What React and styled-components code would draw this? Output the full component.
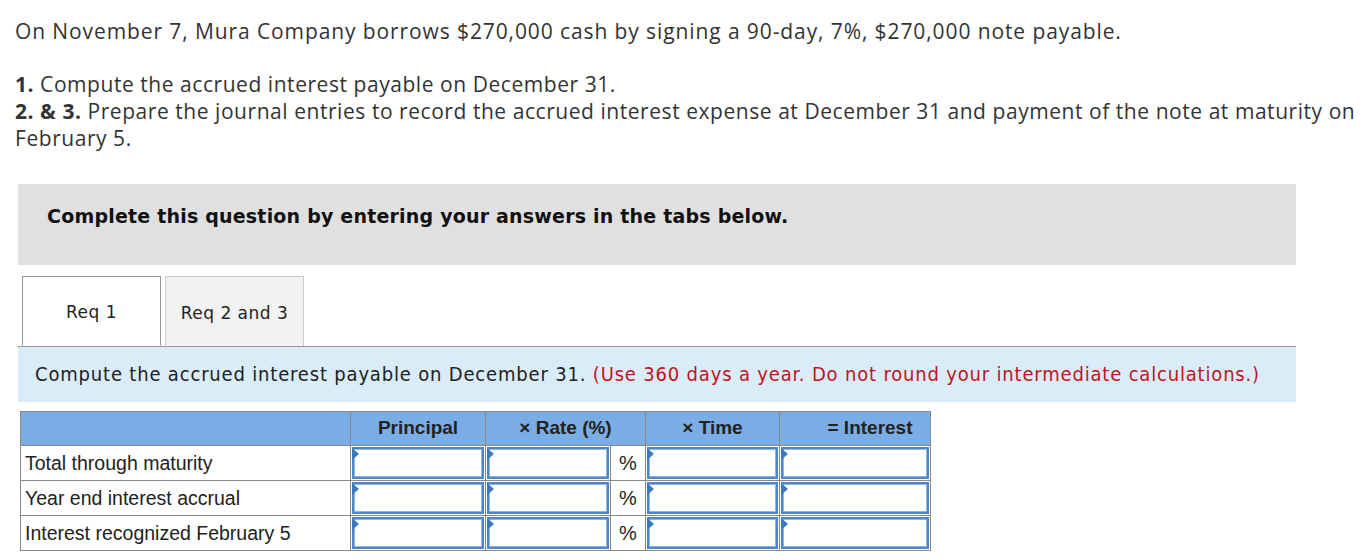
import React from 'react'
import styled, { createGlobalStyle } from 'styled-components'

const GlobalStyle = createGlobalStyle`
  body {
    margin: 0;
    background: #fff;
    font-family: "Open Sans", "Liberation Sans", sans-serif;
  }
`

const Page = styled.div`
  padding: 18px 0 0 15px;
  width: 1353px;
`

const Intro = styled.p`
  margin: 0;
  font-size: 21px;
  letter-spacing: ${p => p.$spacing || 0.55}px;
  line-height: 27px;
  color: #333;
  white-space: nowrap;
`

const Steps = styled(Intro)`
  margin-top: 26px;
  b { font-weight: 700; }
`

const Banner = styled.div`
  margin: 32px 0 0 3px;
  width: 1278px;
  height: 81px;
  box-sizing: border-box;
  background: #e0e0e0;
  padding: 21px 0 0 29px;
  font-family: "DejaVu Sans", Verdana, sans-serif;
  font-weight: 700;
  font-size: 19px;
  letter-spacing: 0.2px;
  color: #111;
`

const TabBar = styled.div`
  display: flex;
  gap: 4px;
  margin: 11px 0 0 3px;
  width: 1278px;
  padding-left: 4px;
  box-sizing: border-box;
  border-bottom: 1px solid #999;
`

const Tab = styled.div`
  width: 139px;
  height: 70px;
  box-sizing: border-box;
  display: flex;
  align-items: center;
  justify-content: center;
  font-family: "DejaVu Sans", Verdana, sans-serif;
  font-size: 17px;
  letter-spacing: 0.5px;
  color: #222;
  background: ${p => (p.$active ? '#fff' : '#f2f2f2')};
  border: 1px solid ${p => (p.$active ? '#999' : '#ccc')};
  border-bottom: ${p => (p.$active ? '1px solid #fff' : 'none')};
  margin-bottom: ${p => (p.$active ? '-1px' : '0')};
  padding-top: 2px;
`

const Instruction = styled.div`
  margin-left: 3px;
  width: 1278px;
  height: 55px;
  box-sizing: border-box;
  background: #dbecf9;
  padding: 15px 0 0 17px;
  font-family: "DejaVu Sans Condensed", "DejaVu Sans", Verdana, sans-serif;
  font-size: 20px;
  letter-spacing: 0.82px;
  color: #222;
  white-space: nowrap;
`

const Red = styled.span`
  color: #c1141b;
`

const Table = styled.table`
  margin: 9px 0 0 5px;
  border-collapse: collapse;
  table-layout: fixed;
  font-family: "Liberation Sans Narrow", "Liberation Sans", Arial, sans-serif;
  color: #222;
`

const Head = styled.th`
  height: 34px;
  background: #7aade4;
  border: 1px solid #888;
  font-size: 19px;
  font-weight: 700;
  text-align: center;
  padding: 0 0 2px ${p => p.$pad || 0}px;
  box-sizing: border-box;
`

const Label = styled.td`
  height: 34px;
  border: 1px solid #888;
  padding: 0 0 0 4px;
  font-size: 19.5px;
  text-align: left;
`

const InputCell = styled.td`
  height: 34px;
  border: 1px solid #888;
  padding: 1px;
  box-sizing: border-box;
`

const Unit = styled.td`
  border: 1px solid #888;
  font-size: 20px;
  text-align: center;
  padding: 0;
`

const FieldWrap = styled.div`
  position: relative;
  height: 32px;
  box-sizing: border-box;
  background: #fff;
  border: 2px solid #4d86c9;
  box-shadow: inset 0 0 0 1px #8fb5e3;
`

const Marker = styled.span`
  position: absolute;
  left: -2px;
  top: -1px;
  width: 0;
  height: 0;
  border-top: 6px solid transparent;
  border-bottom: 6px solid transparent;
  border-left: 7px solid #3b78c2;
`

const Field = () => (
  <FieldWrap>
    <Marker />
  </FieldWrap>
)

const rows = [
  'Total through maturity',
  'Year end interest accrual',
  'Interest recognized February 5',
]

export default function App() {
  return (
    <>
      <GlobalStyle />
      <Page>
        <Intro $spacing={0.9}>
          On November 7, Mura Company borrows $270,000 cash by signing a 90-day, 7%, $270,000 note payable.
        </Intro>
        <Steps>
          <b>1.</b> Compute the accrued interest payable on December 31.
          <br />
          <b>2. &amp; 3.</b> Prepare the journal entries to record the accrued interest expense at December 31 and payment of the note at maturity on
          <br />
          February 5.
        </Steps>
        <Banner>Complete this question by entering your answers in the tabs below.</Banner>
        <TabBar>
          <Tab $active>Req 1</Tab>
          <Tab>Req 2 and 3</Tab>
        </TabBar>
        <Instruction>
          Compute the accrued interest payable on December 31.{' '}
          <Red>(Use 360 days a year. Do not round your intermediate calculations.)</Red>
        </Instruction>
        <Table>
          <colgroup>
            <col style={{ width: 330 }} />
            <col style={{ width: 135 }} />
            <col style={{ width: 125 }} />
            <col style={{ width: 35 }} />
            <col style={{ width: 134 }} />
            <col style={{ width: 151 }} />
          </colgroup>
          <thead>
            <tr>
              <Head></Head>
              <Head>Principal</Head>
              <Head colSpan={2}>× Rate (%)</Head>
              <Head>× Time</Head>
              <Head $pad={30}>= Interest</Head>
            </tr>
          </thead>
          <tbody>
            {rows.map(r => (
              <tr key={r}>
                <Label>{r}</Label>
                <InputCell><Field /></InputCell>
                <InputCell><Field /></InputCell>
                <Unit>%</Unit>
                <InputCell><Field /></InputCell>
                <InputCell><Field /></InputCell>
              </tr>
            ))}
          </tbody>
        </Table>
      </Page>
    </>
  )
}
